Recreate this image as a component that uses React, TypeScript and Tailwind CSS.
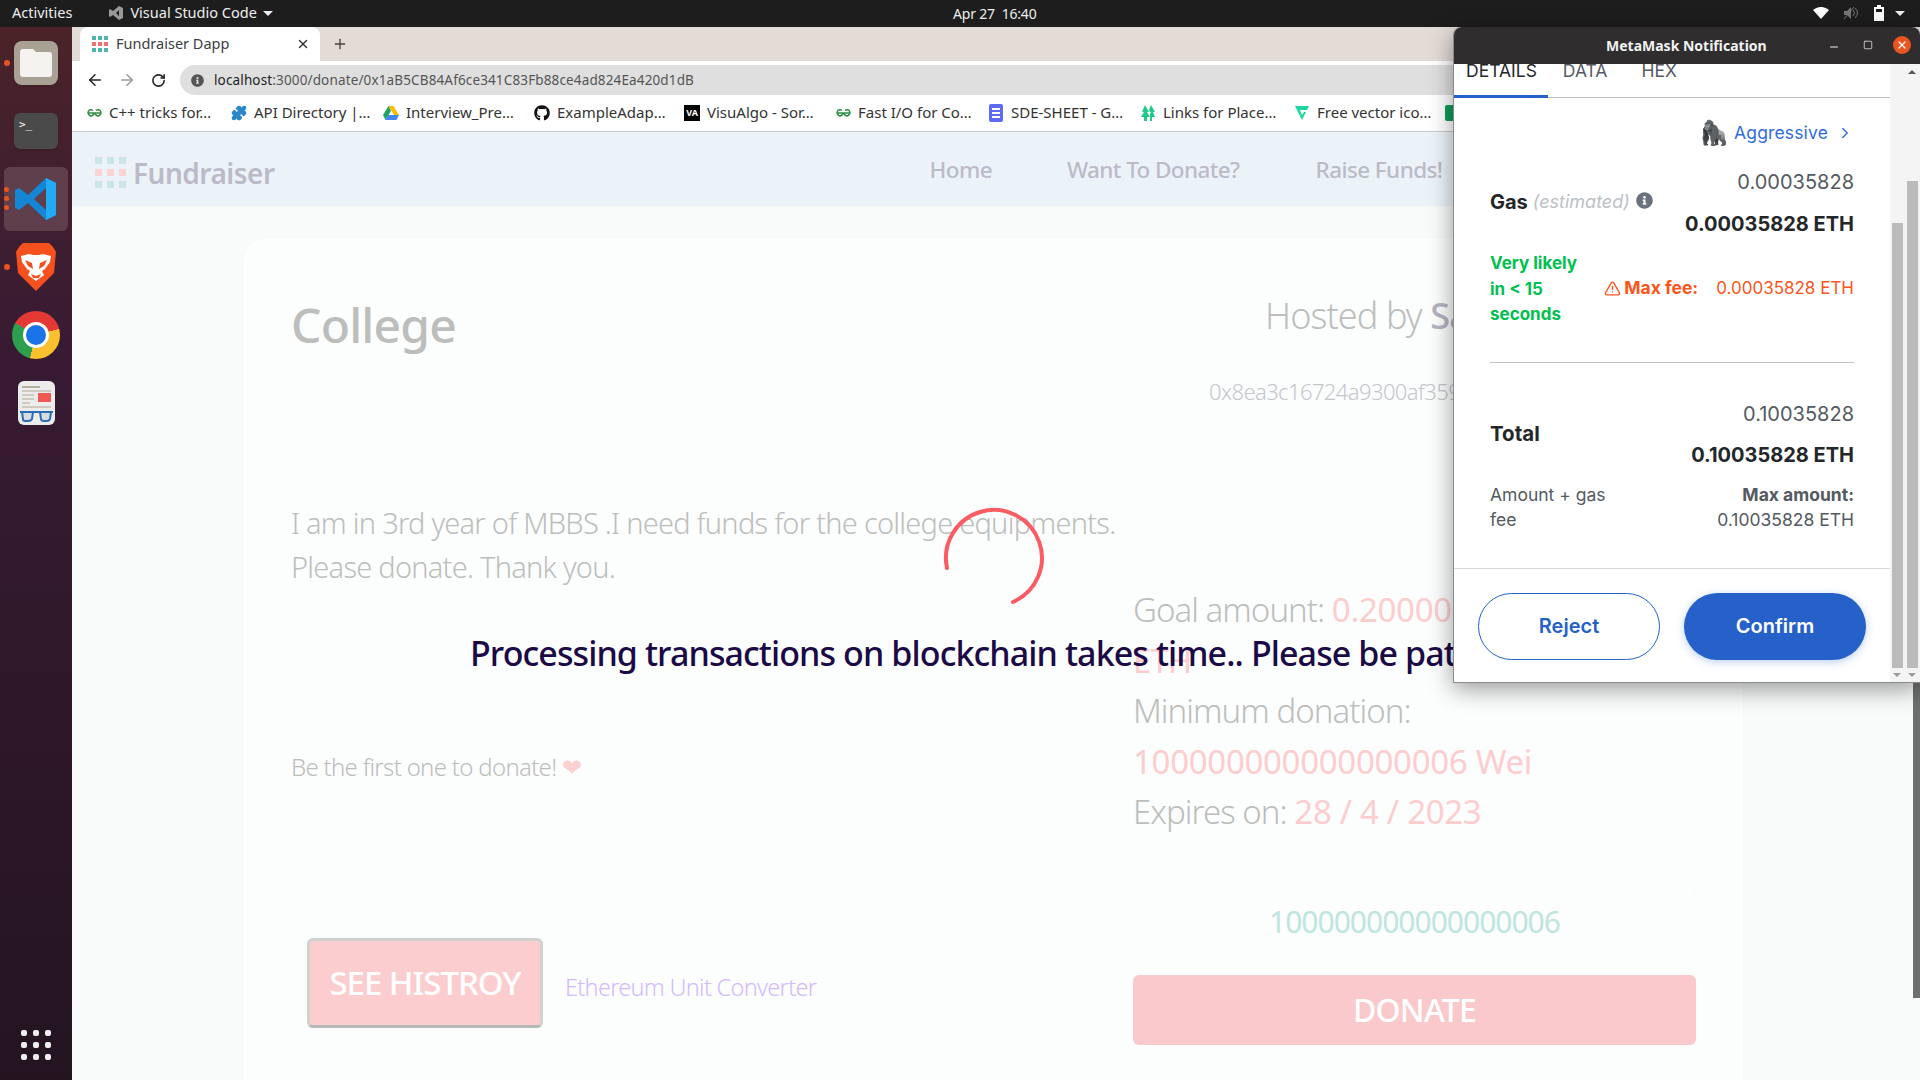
import { ArrowLeft, ArrowRight, ChevronRight, Minus, Plus, Puzzle, RotateCw, Square, TriangleAlert, X } from "lucide-react";
import { FaGithub, FaInfoCircle } from "react-icons/fa";

const ui = "font-['Noto_Sans',sans-serif]";
const mm = "font-['Inter',sans-serif]";

function DotGrid({ size, gap, muted }: { size: number; gap: number; muted?: boolean }) {
  const colors = muted
    ? ["#c9e6e2", "#c9e6e2", "#c9e6e2", "#fbd3d3", "#fbd3d3", "#fbd3d3", "#c9e6e2", "#c9e6e2", "#c9e6e2"]
    : ["#4db6ac", "#4db6ac", "#4db6ac", "#f47171", "#f47171", "#f47171", "#4db6ac", "#4db6ac", "#4db6ac"];
  return (
    <span className="grid grid-cols-3 shrink-0" style={{ gap }}>
      {colors.map((c, i) => (
        <span key={i} style={{ width: size, height: size, background: c }} />
      ))}
    </span>
  );
}

function Geeks() {
  return (
    <svg width="15" height="10" viewBox="0 0 15 10" fill="none" stroke="#2f8d46" strokeWidth="1.4">
      <path d="M1 5h13M7 5a3 3 0 1 1-1-2.5M8 5a3 3 0 1 0 1-2.5" />
      <path d="M7 5a3 3 0 0 1-5 2M8 5a3 3 0 0 0 5 2" />
    </svg>
  );
}

const bookmarks: [React.ReactNode, string, string][] = [
  [<Geeks />, "C++ tricks for…", "w-[145px]"],
  [<Puzzle size={16} fill="#2a87c8" stroke="#2a87c8" />, "API Directory |…", "w-[152px]"],
  [
    <svg width="16" height="14" viewBox="0 0 16 14">
      <path d="M5.5 0h5L16 9h-5z" fill="#fbbc04" />
      <path d="M5.5 0 0 9l2.5 5L8 5z" fill="#1fa463" />
      <path d="M2.5 14h11L16 9H5z" fill="#4285f4" />
    </svg>,
    "Interview_Pre…",
    "w-[151px]",
  ],
  [<FaGithub className="text-[16px] text-[#111]" />, "ExampleAdap…", "w-[150px]"],
  [<span className="w-4 h-4 bg-black text-white text-[9px] font-bold leading-4 text-center">VA</span>, "VisuAlgo - Sor…", "w-[151px]"],
  [<Geeks />, "Fast I/O for Co…", "w-[153px]"],
  [
    <span className="w-3.5 h-[18px] rounded-[2px] bg-[#5c6bf0] flex flex-col justify-center gap-[2px] px-[3px]">
      <i className="h-[2px] bg-white" />
      <i className="h-[2px] bg-white" />
      <i className="h-[2px] bg-white" />
    </span>,
    "SDE-SHEET - G…",
    "w-[152px]",
  ],
  [
    <svg width="14" height="16" viewBox="0 0 14 16" fill="#22c98a">
      <path d="M4 0l4 7H6l3 5H6v4H3v-4H0l3-5H1z" />
      <path d="M10 0l4 7h-2l2 5h-3v4H9V9l1-2H9l-1-2z" />
    </svg>,
    "Links for Place…",
    "w-[154px]",
  ],
  [
    <svg width="16" height="16" viewBox="0 0 16 16">
      <path d="M1 1h14l-2 4H6l2 5 2-3h2l-4 8z" fill="#1fd6a0" />
    </svg>,
    "Free vector ico…",
    "w-[151px]",
  ],
];

function Dock() {
  return (
    <aside className="w-[72px] shrink-0 bg-gradient-to-b from-[#4b2329] via-[#381b33] via-30% to-[#241420] flex flex-col items-center relative">
      <div className="mt-[14px] w-11 h-11 rounded-lg bg-[#a9a294] flex items-center justify-center shadow">
        <svg width="32" height="28" viewBox="0 0 32 28">
          <path d="M3 0h10l3 3h13a3 3 0 0 1 3 3v19a3 3 0 0 1-3 3H3a3 3 0 0 1-3-3V3a3 3 0 0 1 3-3z" fill="#f5f3ef" />
        </svg>
      </div>
      <div className="mt-[28px] w-11 h-9 rounded-md bg-[#4a4a4a] text-white text-[11px] leading-none pl-[5px] pt-[6px] font-['DejaVu_Sans_Mono',monospace] shadow">&gt;_</div>
      <div className="mt-[18px] w-[64px] h-[64px] rounded-md bg-[#5f3f4c] flex items-center justify-center relative">
        <svg width="44" height="44" viewBox="0 0 44 44">
          <path d="M32 1 42 6v32l-10 5L14 26 5 33l-4-2V13l4-2 9 7z" fill="#1585d6" />
          <path d="M32 11 20 22l12 11z" fill="#5f3f4c" />
          <path d="M32 1 42 6v32l-10 5z" fill="#23aaf5" />
        </svg>
      </div>
      <div className="mt-[12px] w-[42px] h-[48px] flex items-center justify-center">
        <svg width="40" height="48" viewBox="0 0 40 48">
          <path d="M7 0h26l4 4 3 5-2 21-18 18L2 30 0 9l3-5z" fill="#f4511e" />
          <path d="M5 13l8-2 4 1h6l4-1 8 2-1 6-5 7-3 2 2 4-8 6-8-6 2-4-3-2-5-7z" fill="#fff" />
          <path d="M9 17l7 3 1 6-5-3zM31 17l-7 3-1 6 5-3zM15 31l5 2 5-2-2 4h-6z" fill="#f4511e" />
        </svg>
      </div>
      <div className="mt-[20px] w-12 h-12 rounded-full relative bg-[conic-gradient(#e53935_0_75deg,#fbc02d_75deg_195deg,#2e9e4f_195deg_300deg,#e53935_300deg)]">
        <span className="absolute inset-[11px] rounded-full bg-[#1a73e8] border-[3px] border-white" />
      </div>
      <div className="mt-[22px] w-[37px] h-[44px] rounded-md bg-[#ececec] relative flex flex-col gap-[2px] pt-[5px] px-[4px]">
        <i className="h-[2px] w-[18px] bg-[#b5ae9f]" />
        <i className="h-[2px] bg-[#cfcabf]" />
        <i className="h-[2px] w-3 bg-[#cfcabf]" />
        <i className="h-[2px] w-3 bg-[#cfcabf]" />
        <i className="h-[2px] w-2 bg-[#cfcabf]" />
        <i className="h-[2px] bg-[#cfcabf]" />
        <span className="absolute right-[4px] top-[12px] w-[13px] h-[9px] bg-[#ee5a52]" />
        <svg className="absolute left-[1px] bottom-[2px]" width="35" height="13" viewBox="0 0 35 13" fill="#d8dde0" stroke="#2a6fb5" strokeWidth="2">
          <path d="M1 2h33" />
          <path d="M3 2h11l-1 7q-1 2-4 2H6q-2 0-2-2zM21 2h11l-1 7q-1 2-3 2h-3q-3 0-3-2z" />
        </svg>
      </div>
      <div className="absolute left-[21px] top-[1003px] grid grid-cols-3 gap-[6px]">
        {Array.from({ length: 9 }).map((_, i) => (
          <i key={i} className="w-[6px] h-[6px] rounded-[2px] bg-[#eee]" />
        ))}
      </div>
      {/* running app dots */}
      <i className="absolute left-[4px] top-[33px] w-[6px] h-[6px] rounded-full bg-[#e95420]" />
      <i className="absolute left-[4px] top-[160px] w-[5px] h-[5px] rounded-full bg-[#e95420]" />
      <i className="absolute left-[4px] top-[169px] w-[5px] h-[5px] rounded-full bg-[#e95420]" />
      <i className="absolute left-[4px] top-[178px] w-[5px] h-[5px] rounded-full bg-[#e95420]" />
      <i className="absolute left-[4px] top-[237px] w-[6px] h-[6px] rounded-full bg-[#e95420]" />
    </aside>
  );
}

function Browser() {
  return (
    <div className="flex-1 min-w-0 flex flex-col bg-[#f8fbfa] overflow-hidden">
      <div className="h-[34px] bg-[#e3dbd6] flex items-end pl-[8px] shrink-0">
        <div className="w-[240px] h-[34px] bg-white rounded-t-lg flex items-center pl-[12px] pr-[10px] pb-[1px]">
          <DotGrid size={4} gap={2} />
          <span className="ml-[8px] text-[14.5px] text-[#3c4043]">Fundraiser Dapp</span>
          <X size={14} strokeWidth={2.5} className="ml-auto text-[#333]" />
        </div>
        <Plus size={16} className="ml-[12px] mb-[9px] text-[#444]" />
      </div>
      <div className="h-[34px] bg-white flex items-center pl-[14px] shrink-0 border-t-[4px] border-white">
        <ArrowLeft size={18} className="text-[#222]" />
        <ArrowRight size={18} className="ml-[14px] text-[#999]" />
        <RotateCw size={15} strokeWidth={2.5} className="ml-[15px] text-[#222]" />
        <div className="ml-[14px] flex-1 h-[30px] rounded-l-full bg-[#dfdfdf] flex items-center pl-[11px]">
          <FaInfoCircle className="text-[13px] text-[#555]" />
          <span className="ml-[10px] text-[13.5px] tracking-[0.14px] text-[#555]">
            <span className="text-[#222]">localhost</span>:3000/donate/0x1aB5CB84Af6ce341C83Fb88ce4ad824Ea420d1dB
          </span>
        </div>
      </div>
      <div className="h-[37px] bg-white flex items-center pl-[14px] pb-[1px] shrink-0 border-b border-[#c8cacc] text-[15px] text-[#333]">
        {bookmarks.map(([icon, label, w], i) => (
          <div key={i} className={`flex items-center gap-[7px] shrink-0 ${w}`}>
            <span className="w-4 flex justify-center">{icon}</span>
            <span>{label}</span>
          </div>
        ))}
        <span className="w-4 h-4 rounded-[2px] bg-[#0f9d58]" />
      </div>
      <Page />
    </div>
  );
}

function Page() {
  return (
    <div className="flex-1 relative min-h-0">
      <nav className="h-[74px] bg-[#ebf3f9] flex items-center pl-[23px] text-[#bcbac8] font-medium">
        <span className="mt-[6px]">
          <DotGrid size={7} gap={5} muted />
        </span>
        <span className="ml-[7px] mt-[7px] text-[28px] font-semibold tracking-[-0.5px]">Fundraiser</span>
        <span className="ml-[655px] mt-[1px] text-[22.5px] tracking-[-0.6px]">Home</span>
        <span className="ml-[75px] mt-[1px] text-[22.5px] tracking-[-0.6px]">Want To Donate?</span>
        <span className="ml-[76px] mt-[1px] text-[22.5px] tracking-[-0.6px]">Raise Funds!</span>
      </nav>
      <div className="ml-[171px] mr-[177px] mt-[32px] bg-[#fcfdfd] rounded-t-3xl px-[48px] pt-[50px] h-[900px] shadow-[0_0_4px_rgba(0,0,0,0.02)]">
        <div className="grid grid-cols-[842px_1fr]">
          <div>
            <h1 className="mt-[3px] text-[48px] leading-[68px] font-medium text-[#bcbebc] tracking-[-0.8px]">College</h1>
            <p className="mt-[142px] text-[29px] leading-[44px] font-light text-[#bcbebc] tracking-[-0.75px] w-[850px]">
              I am in 3rd year of MBBS .I need funds for the college equipments. Please donate. Thank you.
            </p>
            <p className="mt-[160px] text-[24px] font-light text-[#bcbebc] tracking-[-0.7px]">
              Be the first one to donate! <span className="text-[#fbd0d0]">❤</span>
            </p>
            <div className="mt-[153px] ml-[16px] flex items-center gap-[22px]">
              <button className="w-[236px] h-[90px] rounded-md border-[3px] border-[#d0d2d0] border-b-[#b7b9b8] bg-[#fccdcf] text-white text-[33px] font-medium tracking-[-1px]">SEE HISTROY</button>
              <a className="text-[#d3bafc] text-[23.5px] font-light tracking-[-0.7px] mt-[9px]">Ethereum Unit Converter</a>
            </div>
          </div>
          <div>
            <div className="mt-[1px] ml-[132px] text-[36px] text-[#bcbebc] whitespace-nowrap tracking-[-0.9px] font-light">
              Hosted by <span className="font-medium text-[#b4b3c2]">Sam</span>
            </div>
            <div className="mt-[32px] ml-[76px] text-[22px] text-[#c4c6cc] font-light whitespace-nowrap tracking-[-0.6px]">0x8ea3c16724a9300af359</div>
            <div className="mt-[177px] text-[33px] leading-[50.5px] font-light text-[#bcbebc] tracking-[-0.95px]">
              <div>Goal amount: <span className="text-[#fccdcf] font-normal tracking-[-0.3px]">0.200000</span></div>
              <div className="text-[#fccdcf] font-normal">ETH</div>
              <div>Minimum donation:</div>
              <div className="text-[#fccdcf] font-normal tracking-[-0.3px]">100000000000000006 Wei</div>
              <div>Expires on: <span className="text-[#fccdcf] font-normal tracking-[-0.3px]">28 / 4 / 2023</span></div>
            </div>
            <div className="mt-[49px] w-[563px] h-[70px] rounded-md bg-[#fcfdfd] border border-[#fafbfb] flex items-center justify-center text-[30px] text-[#bfe5df] tracking-[-1px]">100000000000000006</div>
            <button className="mt-[18px] w-[563px] h-[70px] rounded-md bg-[#f9c9cb] text-white text-[32px] font-medium tracking-[-0.8px]">DONATE</button>
          </div>
        </div>
      </div>
      {/* loading overlay */}
      <svg className="absolute left-[860px] top-[364px]" width="124" height="124" viewBox="0 0 124 124">
        <path d="M15 72A48 48 0 1 1 81 106" fill="none" stroke="#fb5b62" strokeWidth="4" strokeLinecap="round" />
      </svg>
      <div className="absolute left-[398px] top-[496px] whitespace-nowrap text-[34px] font-medium text-[#1b0a45] tracking-[-0.9px]">
        Processing transactions on blockchain takes time.. Please be patient
      </div>
      <i className="absolute right-0 top-[551px] w-[7px] h-[315px] bg-[#6e6e6e]" />
    </div>
  );
}

function Row({ left, right }: { left: React.ReactNode; right: React.ReactNode }) {
  return <div className="flex justify-between items-center">{left}{right}</div>;
}

function MetaMask() {
  return (
    <div className={`absolute left-[1453px] top-[27px] w-[467px] h-[656px] bg-white rounded-t-lg border-l border-b border-[#8a8a8a] shadow-[0_6px_24px_rgba(0,0,0,0.4)] flex flex-col ${mm}`}>
      <div className={`h-[37px] shrink-0 rounded-t-lg bg-[#2f2d2e] flex items-center text-white relative ${ui}`}>
        <span className="absolute left-[152px] text-[14px] font-bold text-[#f2f2f2]">MetaMask Notification</span>
        <Minus size={12} className="absolute left-[374px] top-[14px] text-[#eee]" />
        <Square size={10} strokeWidth={1.8} className="absolute left-[409px] top-[13px] text-[#eee]" />
        <span className="absolute left-[439px] top-[9px] w-[18px] h-[18px] rounded-full bg-[#e95420] flex items-center justify-center"><X size={12} strokeWidth={2.5} /></span>
      </div>
      <div className="flex flex-1 min-h-0">
        <div className="w-[436px] flex flex-col">
          <div className="h-[34px] border-b border-[#bbc0c5] flex text-[17.5px] leading-[14px] text-[#535a61] relative">
            <span className="ml-[12px] text-[#24272a]">DETAILS</span>
            <span className="ml-[26px]">DATA</span>
            <span className="ml-[34px]">HEX</span>
            <i className="absolute left-0 -bottom-[1px] w-[94px] h-[3px] bg-[#2561c9]" />
          </div>
          <div className="px-[36px] flex-1 flex flex-col">
            <div className="mt-[21px] flex items-center justify-end text-[#2f6ddc] text-[17.5px]">
              <span className="text-[24px] leading-[28px] mr-[5px]">🦍</span>
              <span className="tracking-[0.15px]">Aggressive</span>
              <ChevronRight size={18} strokeWidth={1.8} className="ml-[8px]" />
            </div>
            <div className="mt-[23px] text-right text-[20px] leading-[24px] text-[#535a61]">0.00035828</div>
            <Row
              left={
                <div className="flex items-center -mt-[27px]">
                  <b className="text-[20px] text-[#24272a]">Gas</b>
                  <i className="ml-[5px] text-[18px] text-[#bbc0c5]">(estimated)</i>
                  <FaInfoCircle className="ml-[6px] -mt-[3px] text-[17px] text-[#6a737d]" />
                </div>
              }
              right={<b className="mt-[18px] text-[20px] leading-[24px] text-[#24272a]">0.00035828 ETH</b>}
            />
            <div className="mt-[15px] flex items-center">
              <div className="w-[108px] text-[#01c04f] font-bold text-[17px] leading-[25.5px]">Very likely<br />in &lt; 15<br />seconds</div>
              <div className="flex-1 flex justify-end items-center text-[17px] text-[#f9561c] whitespace-nowrap -mt-[2px]">
                <TriangleAlert size={17} className="mr-[3px]" />
                <b className="text-[17.5px]">Max fee:</b>
                <span className="ml-[18px]">0.00035828 ETH</span>
              </div>
            </div>
            <div className="mt-[34px] border-t border-[#bbc0c5]" />
            <div className="mt-[39px] text-right text-[20px] leading-[24px] text-[#535a61]">0.10035828</div>
            <Row
              left={<b className="-mt-[23px] text-[20.5px] text-[#24272a]">Total</b>}
              right={<b className="mt-[17px] text-[20px] leading-[24px] text-[#24272a]">0.10035828 ETH</b>}
            />
            <div className="mt-[15px] flex justify-between text-[17.5px] leading-[25px] text-[#535a61]">
              <div>Amount + gas<br />fee</div>
              <div className="text-right"><b>Max amount:</b><br />0.10035828 ETH</div>
            </div>
          </div>
          <div className="h-[114px] border-t border-[#d6d9dc] flex items-start gap-[24px] px-[24px] pt-[24px]">
            <button className="w-[182px] h-[67px] rounded-[34px] border border-[#2561c9] text-[#2561c9] text-[20px] font-semibold pb-[2px]">Reject</button>
            <button className="w-[182px] h-[67px] rounded-[34px] bg-[#2561c9] text-white text-[20px] font-semibold pb-[2px] shadow-[0_2px_8px_rgba(37,97,201,0.3)]">Confirm</button>
          </div>
        </div>
        <div className="flex-1 bg-[#f4f4f4] relative">
          <i className="absolute left-[2px] top-[159px] bottom-[14px] w-[11px] bg-[#bbb]" />
          <i className="absolute right-[2px] top-[117px] bottom-[14px] w-[11px] bg-[#bbb]" />
          <i className="absolute right-[4px] top-[6px] border-x-[4px] border-x-transparent border-b-[4px] border-b-[#555]" />
          <i className="absolute left-[3px] bottom-[5px] border-x-[4px] border-x-transparent border-t-[4px] border-t-[#999]" />
          <i className="absolute right-[4px] bottom-[5px] border-x-[4px] border-x-transparent border-t-[4px] border-t-[#999]" />
        </div>
      </div>
    </div>
  );
}

export default function App() {
  return (
    <div className={`relative w-[1920px] h-[1080px] overflow-hidden flex flex-col ${ui}`}>
      <header className="h-[27px] shrink-0 bg-[#1d1d1d] text-[#eee] text-[14.5px] relative flex items-center pb-[1px]">
        <span className="ml-[12px]">Activities</span>
        <span className="ml-[36px] mr-[6px] w-4 h-4 text-[#aaa]">
          <svg viewBox="0 0 16 16" width="16" height="16"><path d="M11 1l4 2v10l-4 2-6-5-3 2-1-1V5l1-1 3 2zM11 5L8 8l3 3z" fill="#999" /></svg>
        </span>
        <span>Visual Studio Code</span>
        <i className="ml-[6px] border-x-[5px] border-x-transparent border-t-[5px] border-t-[#eee]" />
        <span className="absolute left-[953px] text-[14px] tracking-[-0.2px]">Apr 27&nbsp; 16:40</span>
        <span className="absolute right-[35px] flex items-center gap-[14px]">
          <svg width="16" height="12" viewBox="0 0 16 12"><path d="M0 3a12 12 0 0 1 16 0L8 12z" fill="#fff" /></svg>
          <svg width="16" height="14" viewBox="0 0 16 14"><path d="M1 5h3l4-4v12L4 9H1z" fill="#777" /><path d="M10 4q3 3 0 6M12 2q5 5 0 10M1 13 11 1" stroke="#777" fill="none" /></svg>
          <svg width="12" height="16" viewBox="0 0 12 16"><path d="M4 0h4v2h3v14H1V2h3z" fill="#fff" /><path d="M3 4h6v3H3z" fill="#1d1d1d" /></svg>
        </span>
        <i className="absolute right-[15px] border-x-[5px] border-x-transparent border-t-[5px] border-t-[#eee]" />
      </header>
      <div className="flex-1 flex min-h-0">
        <Dock />
        <Browser />
      </div>
      <MetaMask />
    </div>
  );
}
